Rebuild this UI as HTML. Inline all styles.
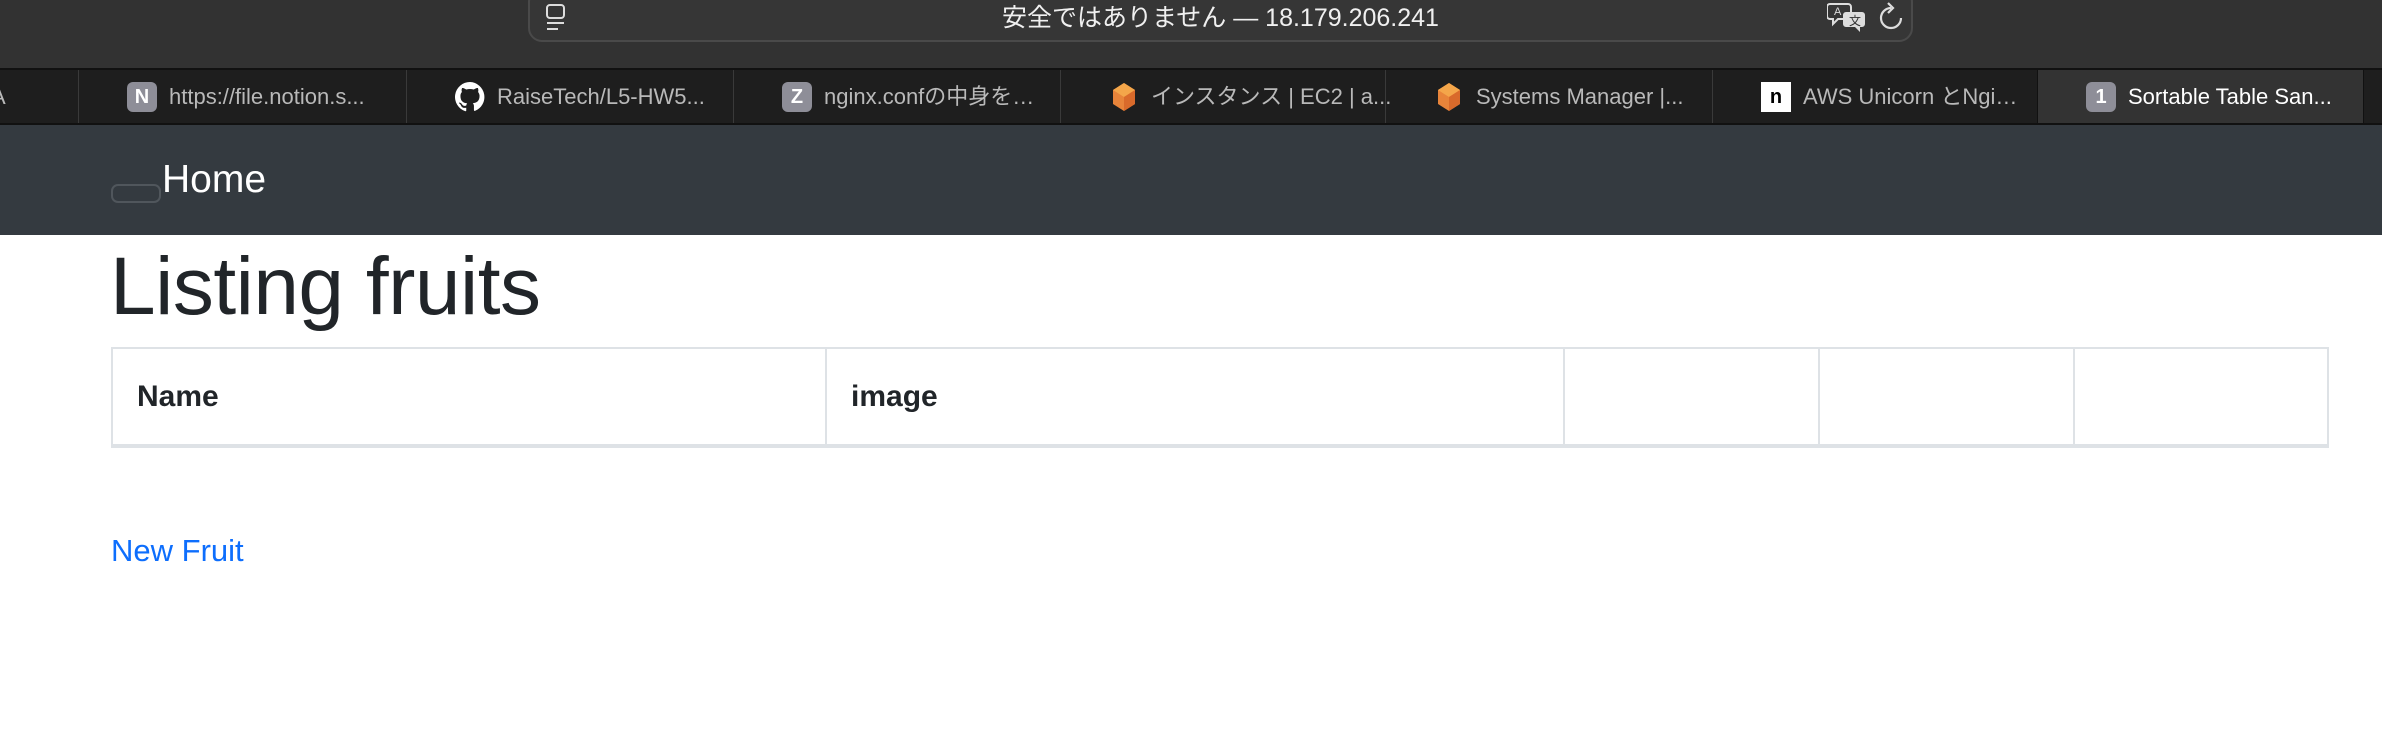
<!DOCTYPE html>
<html><head><meta charset="utf-8">
<style>
*{margin:0;padding:0;box-sizing:border-box}
html,body{width:2382px;height:755px;overflow:hidden;background:#fff;font-family:"Liberation Sans","Noto Sans CJK JP",sans-serif}
#top{position:absolute;left:0;top:0;width:2382px;height:68px;background:#323232}
#addr{position:absolute;left:528px;top:-12px;width:1385px;height:54px;border:2px solid #4a4a4a;border-radius:14px;background:#363636}
#addr .t{position:absolute;left:0;right:0;top:14px;height:28px;line-height:28px;text-align:center;color:#f0f0f0;font-size:25px}
#tabs{position:absolute;left:0;top:68px;width:2382px;height:57px;background:#1e1e1e;border-top:2px solid #111;border-bottom:2px solid #111}
.tab{position:absolute;top:0;height:53px;border-left:1px solid #3a3a3a;color:#b9b9b9;font-size:22px;white-space:nowrap}
.tab .ic{position:absolute;left:48px;top:12px;width:30px;height:30px;border-radius:6px;background:#8e8e98;color:#fff;font-weight:bold;font-size:20px;text-align:center;line-height:30px}
.tab .tx{position:absolute;left:90px;top:13px;height:28px;line-height:28px;overflow:hidden}
#nav{position:absolute;left:0;top:125px;width:2382px;height:110px;background:#343a40}
h1{position:absolute;left:110px;top:240px;font-size:82px;font-weight:500;color:#212529;letter-spacing:-0.5px}
table{position:absolute;left:111px;top:347px;width:2218px;height:101px;border-collapse:collapse}
td{border:2px solid #dee2e6;border-bottom:4px solid #dee2e6;font-weight:bold;font-size:30px;color:#212529;padding-left:24px}
a{position:absolute;left:111px;top:533px;font-size:31px;color:#0d6efd;text-decoration:none}
</style></head><body>
<div id="top">
 <div id="addr">
  <svg style="position:absolute;left:14px;top:12px" width="24" height="32" viewBox="0 0 24 32"><rect x="3" y="3" width="17" height="13" rx="3" fill="none" stroke="#ddd" stroke-width="2"/><line x1="3" y1="21" x2="20" y2="21" stroke="#ddd" stroke-width="2"/><line x1="3" y1="27" x2="14" y2="27" stroke="#ddd" stroke-width="2"/></svg>
  <div class="t">安全ではありません — 18.179.206.241</div>
  <svg style="position:absolute;left:1297px;top:12px" width="40" height="32" viewBox="0 0 40 32"><path d="M3 2h18a3 3 0 0 1 3 3v9a3 3 0 0 1-3 3H11l-5 5v-5H3a3 3 0 0 1-3-3V5a3 3 0 0 1 3-3z" fill="none" stroke="#ddd" stroke-width="2"/><text x="7" y="13" font-size="11" fill="#ddd" font-family="Liberation Sans">A</text><path d="M19 10h16a3 3 0 0 1 3 3v9a3 3 0 0 1-3 3h-2v5l-5-5h-9a3 3 0 0 1-3-3v-9a3 3 0 0 1 3-3z" fill="#ddd"/><text x="22" y="23" font-size="12" fill="#333" font-family="Noto Sans CJK JP">文</text></svg>
  <svg style="position:absolute;left:1348px;top:12px" width="26" height="30" viewBox="0 0 26 30"><path d="M13 6a10 10 0 1 0 10 10" fill="none" stroke="#ddd" stroke-width="2.2"/><path d="M10 1l5 5-5 5" fill="none" stroke="#ddd" stroke-width="2.2"/></svg>
 </div>
</div>
<div id="tabs">
 <div class="tab" style="left:-20px;width:98px"><span class="tx" style="left:10px">A</span></div>
 <div class="tab" style="left:78px;width:328px"><div class="ic">N</div><span class="tx">https://file.notion.s...</span></div>
 <div class="tab" style="left:406px;width:327px"><svg class="ic" style="background:none" viewBox="0 0 16 16"><path fill="#fff" d="M8 0a8 8 0 0 0-2.5 15.6c.4 0 .5-.2.5-.4v-1.5c-2.200.5-2.7-1-2.7-1-.4-.9-.9-1.2-.9-1.2-.7-.5.1-.5.1-.5.8.1 1.2.8 1.2.8.7 1.3 1.9.9 2.3.7.1-.5.3-.9.5-1.1-1.8-.2-3.6-.9-3.6-4 0-.9.3-1.6.8-2.100-.1-.2-.4-1 .1-2.100 0 0 .7-.2 2.200.8a7.5 7.5 0 0 1 4 0c1.500-1 2.200-.8 2.200-.8.4 1.100.2 1.900.1 2.100.5.6.8 1.300.8 2.100 0 3.100-1.900 3.700-3.600 3.900.3.3.6.8.6 1.500v2.200c0 .2.1.5.6.4A8 8 0 0 0 8 0z"/></svg><span class="tx">RaiseTech/L5-HW5...</span></div>
 <div class="tab" style="left:733px;width:327px"><div class="ic">Z</div><span class="tx">nginx.confの中身を…</span></div>
 <div class="tab" style="left:1060px;width:325px"><svg class="ic" style="background:none" viewBox="0 0 30 30"><path d="M15 1l11 7v14l-11 7-11-7V8z" fill="#e8843a"/><path d="M15 1l11 7-11 7-11-7z" fill="#f4a64a"/><path d="M15 15v14l11-7V8z" fill="#d96a2b"/></svg><span class="tx">インスタンス | EC2 | a...</span></div>
 <div class="tab" style="left:1385px;width:327px"><svg class="ic" style="background:none" viewBox="0 0 30 30"><path d="M15 1l11 7v14l-11 7-11-7V8z" fill="#e8843a"/><path d="M15 1l11 7-11 7-11-7z" fill="#f4a64a"/><path d="M15 15v14l11-7V8z" fill="#d96a2b"/></svg><span class="tx">Systems Manager |...</span></div>
 <div class="tab" style="left:1712px;width:325px"><div class="ic" style="background:#fff;color:#000;border-radius:0">n</div><span class="tx">AWS Unicorn とNgi…</span></div>
 <div class="tab" style="left:2037px;width:326px;background:#333;color:#fff;border-left:1px solid #111"><div class="ic">1</div><span class="tx">Sortable Table San...</span></div>
 <div class="tab" style="left:2363px;width:30px;border-left:1px solid #111"></div>
</div>
<div id="nav">
 <div style="position:absolute;left:111px;top:59px;width:50px;height:19px;border:2px solid #50565c;border-radius:7px"></div>
 <div style="position:absolute;left:162px;top:33px;font-size:39px;color:#fff">Home</div>
</div>
<h1>Listing fruits</h1>
<table><tr><td style="width:714px">Name</td><td style="width:738px">image</td><td style="width:255px"></td><td style="width:255px"></td><td></td></tr></table>
<a>New Fruit</a>
</body></html>
